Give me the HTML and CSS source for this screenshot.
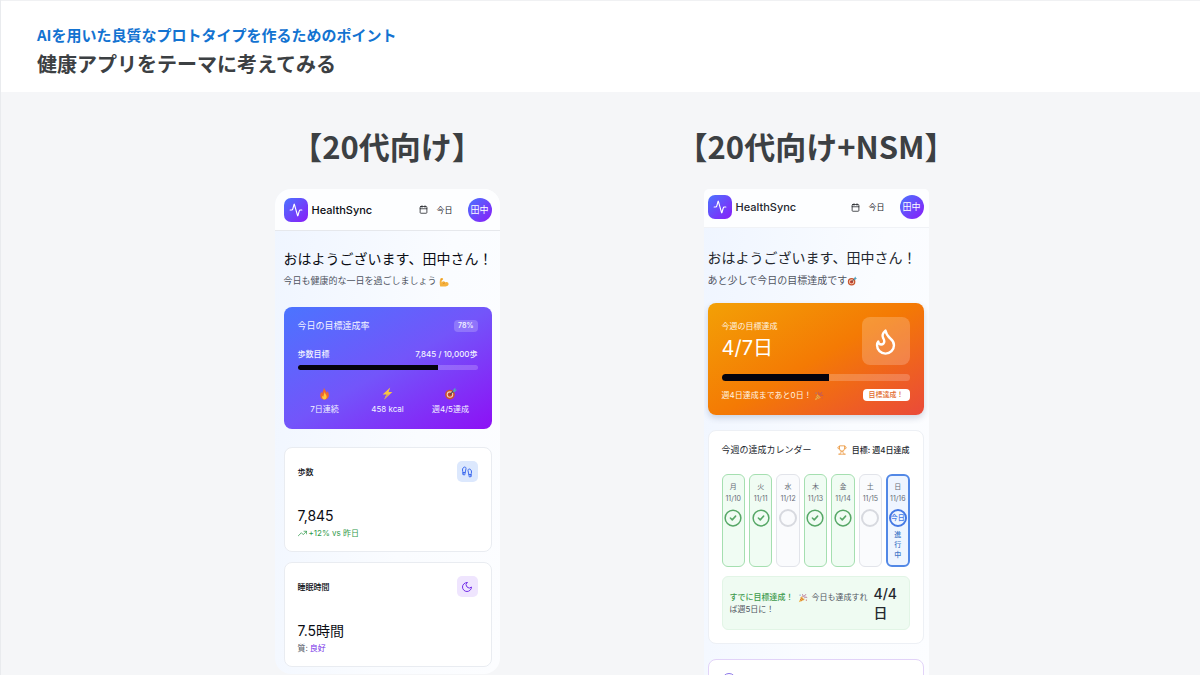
FILE: index.html
```html
<!DOCTYPE html>
<html lang="ja">
  <head>
    <meta charset="utf-8">
    <meta name="viewport" content="width=device-width, initial-scale=1">
    <title>健康アプリをテーマに考えてみる</title>
    <link rel="stylesheet" href="styles.css">
  </head>
  <body>
    <svg class="defs" aria-hidden="true">
      <symbol id="activity" viewBox="0 0 24 24"><path d="M22 12h-2.500a2 2 0 0 0-1.900 1.500l-2.400 8.300a.3.3 0 0 1-.5 0L9.200 2.200a.3.3 0 0 0-.5 0l-2.300 8.300A2 2 0 0 1 4.500 12H2"/></symbol>
      <symbol id="calendar" viewBox="0 0 24 24"><path d="M8 2v4M16 2v4M3 10h18"/><rect x="3" y="4" width="18" height="18" rx="2"/></symbol>
      <symbol id="target" viewBox="0 0 24 24"><circle cx="11" cy="14" r="9" fill="#c8552f"/><circle cx="11" cy="14" r="6" fill="#f3d2bb"/><circle cx="11" cy="14" r="4" fill="#c8402c"/><path d="M11 14 20 5" stroke="#3d4d57" stroke-width="2"/><path d="m17 5 4-4v4h3l-4 4h-3z" fill="#4fa3bf"/></symbol>
      <symbol id="party" viewBox="0 0 24 24"><path d="M2 22 8 8l8 8z" fill="#f0b444"/><path d="m5 15 4 4M7 11l6 6" stroke="#c9653c" stroke-width="2"/><path d="M11 9c2-2 1-5-1-6M15 12c2-3 5-2 7-1M13 10l6-7" fill="none" stroke="#a9527e" stroke-width="2"/><circle cx="5" cy="5" r="1.500" fill="#6b86c9"/><circle cx="20" cy="17" r="1.500" fill="#ce5c55"/></symbol>
      <symbol id="check" viewBox="0 0 24 24"><circle cx="12" cy="12" r="10.500"/><path d="m8.500 12 2.500 2.500 4.500-5"/></symbol>
    </svg>

    <header class="slide-header">
      <p class="topic">AIを用いた良質なプロトタイプを作るためのポイント</p>
      <h1>健康アプリをテーマに考えてみる</h1>
    </header>

    <main class="compare">
      <section class="column">
        <h2>【20代向け】</h2>
        <div class="phone">
          <header class="app-bar">
            <span class="logo"><svg class="icon"><use href="#activity"/></svg></span>
            <span class="brand">HealthSync</span>
            <button class="today" type="button"><svg class="icon"><use href="#calendar"/></svg>今日</button>
            <button class="avatar" type="button">田中</button>
          </header>
          <div class="app-body">
            <h3 class="greeting">おはようございます、田中さん！</h3>
            <p class="lead">今日も健康的な一日を過ごしましょう
              <svg class="emoji" viewBox="0 0 24 24"><path d="M4 3c3-2 6 0 6 2L9 8 7 7l-1 6c4-4 7-3 9 0 4-2 8 0 8 4 0 5-6 6-11 6H3C1 17 1 8 4 3z" fill="#f5b13d"/><path d="M14 14c-2 0-3 1-4 3M7 7 5 6" fill="none" stroke="#d98724" stroke-width="2"/></svg>
            </p>

            <article class="goal">
              <div class="row">
                <h4>今日の目標達成率</h4>
                <span class="percent">78%</span>
              </div>
              <div class="row steps"><span>歩数目標</span><span>7,845 / 10,000歩</span></div>
              <div class="bar" role="progressbar" aria-label="歩数目標" aria-valuenow="78"><div style="width: 78%"></div></div>
              <ul class="stats">
                <li>
                  <svg class="emoji" viewBox="0 0 24 24"><path d="M11 1c1 5 4 5 5 10l2-3c3 5 4 15-6 15-9 0-9-9-6-14l2 3c0-4 3-6 3-11z" fill="#ef6b2c"/><path d="M12 9c1 4 4 5 4 9 0 3-2 5-4 5-4 0-5-4-4-7l2 2c0-4 2-5 2-9z" fill="#ffc83d"/></svg>
                  7日連続
                </li>
                <li>
                  <svg class="emoji" viewBox="0 0 24 24"><path d="M17 1 3 14h7L6 23l15-14h-7z" fill="#f6c544"/><path d="m10 14-4 9 9-9" fill="#d6a06a"/></svg>
                  458 kcal
                </li>
                <li>
                  <svg class="emoji"><use href="#target"/></svg>
                  週4/5達成
                </li>
              </ul>
            </article>

            <article class="metric">
              <div class="row">
                <h4>歩数</h4>
                <span class="tile blue"><svg class="icon" viewBox="0 0 24 24"><path d="M4 16v-2.400C4 11.500 3 10.500 3 8c0-2.700 1.500-6 4.500-6C9.400 2 10 3.800 10 5.500c0 3.100-2 5.700-2 8.700V16a2 2 0 1 1-4 0zM20 20v-2.400c0-2.100 1-3.100 1-5.600 0-2.700-1.500-6-4.500-6C14.600 6 14 7.800 14 9.500c0 3.100 2 5.700 2 8.700V20a2 2 0 1 0 4 0zM16 17h4M4 13h4"/></svg></span>
              </div>
              <p class="value">7,845</p>
              <p class="note up"><svg class="icon" viewBox="0 0 24 24"><path d="m1 18 8-8 5 5 9-9M16 6h7v7"/></svg>+12% vs 昨日</p>
            </article>

            <article class="metric">
              <div class="row">
                <h4>睡眠時間</h4>
                <span class="tile purple"><svg class="icon" viewBox="0 0 24 24"><path d="M12 3a6 6 0 0 0 9 9 9 9 0 1 1-9-9z"/></svg></span>
              </div>
              <p class="value">7.5時間</p>
              <p class="note">質: <strong>良好</strong></p>
            </article>
          </div>
        </div>
      </section>

      <section class="column">
        <h2>【20代向け+NSM】</h2>
        <div class="phone nsm">
          <header class="app-bar">
            <span class="logo"><svg class="icon"><use href="#activity"/></svg></span>
            <span class="brand">HealthSync</span>
            <button class="today" type="button"><svg class="icon"><use href="#calendar"/></svg>今日</button>
            <button class="avatar" type="button">田中</button>
          </header>
          <div class="app-body">
            <h3 class="greeting">おはようございます、田中さん！</h3>
            <p class="lead">あと少しで今日の目標達成です<svg class="emoji"><use href="#target"/></svg></p>

            <article class="streak">
              <div class="row">
                <div>
                  <h4>今週の目標達成</h4>
                  <p class="days-done">4/7日</p>
                </div>
                <span class="flame"><svg class="icon" viewBox="0 0 24 24"><path d="M8.500 14.500A2.500 2.500 0 0 0 11 12c0-1.380-.5-2-1-3-1.072-2.143-.224-4.054 2-6 .5 2.500 2 4.900 4 6.500 2 1.600 3 3.500 3 5.500a7 7 0 1 1-14 0c0-1.153.433-2.294 1-3a2.500 2.500 0 0 0 2.500 2.500z"/></svg></span>
              </div>
              <div class="bar" role="progressbar" aria-label="今週の目標達成" aria-valuenow="57"><div style="width: 57%"></div></div>
              <div class="row remain">
                <span>週4日達成まであと0日！ <svg class="emoji"><use href="#party"/></svg></span>
                <span class="badge">目標達成！</span>
              </div>
            </article>

            <article class="week">
              <div class="row">
                <h4>今週の達成カレンダー</h4>
                <span class="target"><svg class="icon" viewBox="0 0 24 24"><path d="M6 9H4.500a2.500 2.500 0 0 1 0-5H6M18 9h1.500a2.500 2.500 0 0 0 0-5H18M4 22h16M10 14.700V17c0 1-2 1-3 5M14 14.700V17c0 1 2 1 3 5M18 2H6v7a6 6 0 0 0 12 0z"/></svg>目標: 週4日達成</span>
              </div>
              <ol class="calendar">
                <li class="done"><span>月</span><span>11/10</span><svg class="icon"><use href="#check"/></svg></li>
                <li class="done"><span>火</span><span>11/11</span><svg class="icon"><use href="#check"/></svg></li>
                <li><span>水</span><span>11/12</span><i class="ring"></i></li>
                <li class="done"><span>木</span><span>11/13</span><svg class="icon"><use href="#check"/></svg></li>
                <li class="done"><span>金</span><span>11/14</span><svg class="icon"><use href="#check"/></svg></li>
                <li><span>土</span><span>11/15</span><i class="ring"></i></li>
                <li class="current"><span>日</span><span>11/16</span><b class="ring">今日</b><em>進行中</em></li>
              </ol>
              <div class="hint">
                <p><strong>すでに目標達成！</strong><svg class="emoji"><use href="#party"/></svg>今日も達成すれば週5日に！</p>
                <p class="score">4/4日</p>
              </div>
            </article>

            <article class="insight">
              <span class="dot"></span>
            </article>
          </div>
        </div>
      </section>
    </main>
  </body>
</html>
```
FILE: styles.css
```css
* {
  box-sizing: border-box;
}

body {
  margin: 0;
  height: 100vh;
  overflow: hidden;
  border-left: 1px solid #e9ebee;
  color: #3c4043;
  background: #f5f6f8;
  font-family: Inter, "Noto Sans CJK JP", sans-serif;
}

h1, h2, h3, h4, p, ul, ol {
  margin: 0;
  padding: 0;
  font-weight: normal;
}

li {
  list-style: none;
}

button {
  padding: 0;
  border: none;
  background: none;
  font-family: inherit;
}

.defs {
  display: none;
}

.icon {
  fill: none;
  stroke: currentColor;
  stroke-width: 2;
  stroke-linecap: round;
  stroke-linejoin: round;
  flex: none;
}

.emoji {
  width: 10px;
  height: 10px;
  vertical-align: middle;
}

.row {
  display: flex;
  justify-content: space-between;
  align-items: center;
}

/* slide */

.slide-header {
  padding: 24px 36px 15px;
  border-top: 1px solid #f0f1f3;
  background: #fff;
  font-family: "Noto Sans CJK JP", sans-serif;
}

.topic {
  color: #1373d1;
  font-size: 15px;
  font-weight: bold;
  line-height: 20px;
}

h1 {
  margin-top: 5px;
  font-size: 20px;
  font-weight: bold;
  line-height: 27px;
}

.compare {
  display: grid;
  grid-template-columns: 1fr 1fr;
  max-width: 860px;
  margin: 0 auto;
  padding: 34px 0 0 2px;
}

.column {
  display: flex;
  flex-direction: column;
  align-items: center;
}

h2 {
  margin-bottom: 23px;
  font-family: "Noto Sans CJK JP", sans-serif;
  font-size: 31px;
  font-weight: bold;
  line-height: 40px;
  white-space: nowrap;
}

/* phone */

.phone {
  width: 225px;
  overflow: hidden;
  border-radius: 16px;
  color: #0b0d14;
  background: linear-gradient(100deg, #eff5ff, #fafcff 60%, #fcfdff);
}

.nsm {
  border-radius: 5px;
  color: #24272e;
}

.app-bar {
  display: flex;
  align-items: center;
  height: 42px;
  padding: 0 8px 0 9px;
  border-bottom: 1px solid #e6e8ec;
  background: #fdfeff;
}

.nsm .app-bar {
  height: 39px;
  padding: 0 5px 2px 4px;
  border-color: #f0f2f6;
}

.logo {
  display: flex;
  align-items: center;
  justify-content: center;
  width: 24px;
  height: 24px;
  border-radius: 7px;
  color: #fff;
  background: linear-gradient(135deg, #4b74ff, #8a1cf8);
}

.logo .icon {
  width: 14px;
  height: 14px;
}

.brand {
  margin: 0 auto 0 4px;
  font-size: 11px;
  font-weight: 500;
  line-height: 16px;
}

.today {
  display: flex;
  align-items: center;
  gap: 9px;
  margin-right: 15px;
  color: #17191f;
  font-size: 8px;
  line-height: 12px;
}

.today .icon {
  width: 9px;
  height: 9px;
}

.avatar {
  width: 24px;
  height: 24px;
  border-radius: 50%;
  color: #fff;
  background: linear-gradient(135deg, #4b74ff, #8a1cf8);
  font-size: 9px;
  line-height: 24px;
}

.app-body {
  padding: 18px 8px 7px 9px;
}

.nsm .app-body {
  padding: 20px 5px 0 4px;
}

.greeting {
  font-size: 14px;
  line-height: 20px;
  white-space: nowrap;
}

.lead {
  margin-top: 5px;
  color: #50555f;
  font-size: 9px;
  line-height: 14px;
  white-space: nowrap;
}

.bar {
  height: 5px;
  overflow: hidden;
  border-radius: 4px;
  background: rgba(255, 255, 255, 0.2);
}

.bar div {
  height: 100%;
  background: #05030d;
}

/* today's goal */

.goal {
  margin-top: 19px;
  padding: 13px 14px 14px;
  border-radius: 8px;
  color: #f3f3ff;
  background: linear-gradient(150deg, #4b74ff, #7355fa 50%, #8d10f5);
  font-size: 8px;
  line-height: 12px;
}

.goal h4 {
  font-size: 9px;
}

.percent {
  padding: 0 4px;
  border-radius: 4px;
  background: rgba(255, 255, 255, 0.2);
  font-size: 7px;
  font-weight: 600;
}

.steps {
  margin: 16px 0 5px;
  font-weight: 500;
}

.stats {
  display: grid;
  grid-template-columns: repeat(3, 1fr);
  gap: 9px;
  margin-top: 17px;
}

.stats li {
  display: flex;
  flex-direction: column;
  align-items: center;
  gap: 3px;
  white-space: nowrap;
}

.stats .emoji {
  width: 13px;
  height: 13px;
}

/* metrics */

.metric {
  margin-top: 10px;
  padding: 13px 13px 12px;
  border: 1px solid #e9ecf1;
  border-radius: 8px;
  background: #fff;
}

.goal + .metric {
  margin-top: 18px;
}

.metric h4 {
  font-size: 8px;
  font-weight: 500;
  line-height: 12px;
}

.tile {
  display: flex;
  align-items: center;
  justify-content: center;
  width: 21px;
  height: 21px;
  border-radius: 5px;
}

.tile .icon {
  width: 12px;
  height: 12px;
}

.blue {
  color: #3a68ee;
  background: #dce8fd;
}

.purple {
  color: #7430e8;
  background: #efe5fe;
}

.value {
  margin-top: 24px;
  font-size: 14px;
  line-height: 20px;
}

.note {
  display: flex;
  align-items: center;
  gap: 2px;
  margin-top: 1px;
  color: #50555f;
  font-size: 8px;
  line-height: 12px;
}

.note .icon {
  width: 9px;
  height: 9px;
}

.note strong {
  color: #7430e8;
  font-weight: normal;
}

.note.up {
  color: #2f9a4b;
}

/* weekly streak */

.nsm .lead {
  font-size: 10px;
}

.streak {
  margin-top: 16px;
  padding: 14px;
  border-radius: 8px;
  color: #fff4e3;
  background: linear-gradient(150deg, #f3a006, #f47a04 50%, #ea4a3a);
  box-shadow: 0 3px 6px rgba(40, 60, 100, 0.2);
  font-size: 8px;
  line-height: 12px;
}

.days-done {
  margin-top: 2px;
  color: #fff;
  font-size: 20px;
  line-height: 28px;
}

.flame {
  display: flex;
  align-items: center;
  justify-content: center;
  width: 48px;
  height: 48px;
  border-radius: 8px;
  color: #fff;
  background: rgba(255, 255, 255, 0.2);
}

.flame .icon {
  width: 29px;
  height: 29px;
}

.streak .bar {
  height: 7px;
  margin: 9px 0 8px;
}

.remain {
  white-space: nowrap;
}

.badge {
  padding: 0 6px;
  border-radius: 4px;
  color: #e2692b;
  background: #fff;
  font-size: 7px;
  font-weight: 500;
}

/* weekly calendar */

.week,
.insight {
  margin-top: 15px;
  padding: 13px;
  border: 1px solid #edf0f5;
  border-radius: 8px;
  background: #fff;
}

.week h4 {
  font-size: 9px;
  line-height: 12px;
}

.target {
  display: flex;
  align-items: center;
  gap: 5px;
  font-size: 8px;
  font-weight: 500;
  line-height: 12px;
}

.target .icon {
  width: 10px;
  height: 10px;
  color: #eb963c;
}

.calendar {
  display: grid;
  grid-template-columns: repeat(7, 1fr);
  gap: 4px;
  margin-top: 18px;
}

.calendar li {
  display: flex;
  flex-direction: column;
  align-items: center;
  min-width: 0;
  min-height: 93px;
  padding: 6px 0;
  border: 1px solid #e2e4ea;
  border-radius: 6px;
  color: #666b75;
  background: #fafbfd;
  font-size: 7px;
  line-height: 12px;
}

.calendar .done {
  border-color: #a5dfb0;
  background: #f0fcf3;
}

.calendar .current {
  padding: 5px 0;
  border: 2px solid #5288e6;
  background: #eef5ff;
}

.calendar .icon,
.ring {
  width: 18px;
  height: 18px;
  margin-top: 4px;
}

.calendar .icon {
  color: #56a766;
}

.ring {
  border: 2px solid #d7d9df;
  border-radius: 50%;
}

.current .ring {
  display: flex;
  align-items: center;
  justify-content: center;
  border-color: #4478e4;
  color: #4478e4;
  font-size: 7px;
  font-weight: 500;
  white-space: nowrap;
}

.calendar em {
  width: 7px;
  margin-top: 3px;
  color: #4478c8;
  font-style: normal;
  font-weight: 500;
  line-height: 10px;
}

.hint {
  display: flex;
  align-items: center;
  gap: 3px;
  margin-top: 9px;
  padding: 7px;
  border: 1px solid #e2f5e6;
  border-radius: 6px;
  background: #effbf2;
  color: #50555f;
  font-size: 8px;
  line-height: 12px;
}

.hint .emoji {
  margin: 0 4px;
}

.hint strong {
  color: #3e9a4c;
  font-weight: 500;
}

.hint .score {
  flex: none;
  width: 28px;
  color: #24272e;
  font-size: 14px;
  font-weight: 500;
  line-height: 19px;
}

.insight {
  border-color: #e2d3f8;
}

.dot {
  display: block;
  width: 14px;
  height: 14px;
  border: 1px solid #8a74e8;
  border-radius: 50%;
}
```
